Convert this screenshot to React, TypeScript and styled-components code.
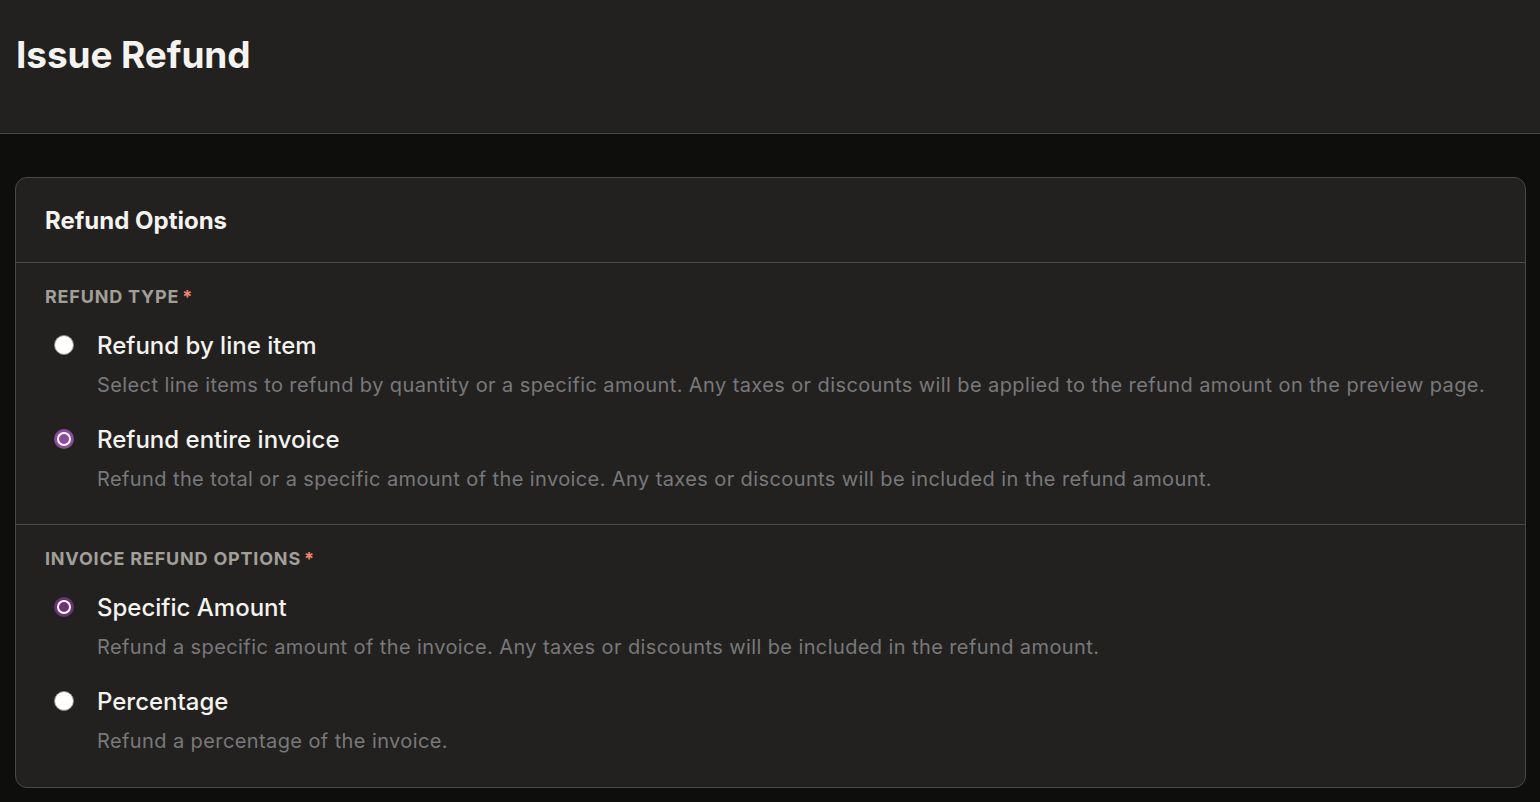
import React, { useState } from 'react';
import styled, { createGlobalStyle } from 'styled-components';

const GlobalStyle = createGlobalStyle`
    html, body {
        margin: 0;
        padding: 0;
        background: #0e0e0d;
        font-family: "Inter", "Noto Sans", sans-serif;
        -webkit-font-smoothing: antialiased;
    }
    * {
        box-sizing: border-box;
    }
`;

const Page = styled.div`
    min-height: 802px;
    background: #0e0e0d;
`;

const TopBar = styled.header`
    height: 134px;
    background: #222120;
    border-bottom: 1px solid #4a4946;
    padding: 32px 16px 0;
`;

const Title = styled.h1`
    margin: 0;
    font-size: 37px;
    line-height: 46px;
    font-weight: 700;
    color: #f4f3ef;
    letter-spacing: -0.1px;
`;

const Content = styled.main`
    padding: 43px 14px 16px 15px;
`;

const Card = styled.section`
    background: #222120;
    border: 1px solid #4a4946;
    border-radius: 12px;
`;

const CardHeader = styled.div`
    height: 85px;
    display: flex;
    align-items: center;
    padding: 0 29px;
    border-bottom: 1px solid #4a4946;
`;

const CardTitle = styled.h2`
    margin: 0;
    font-size: 24px;
    font-weight: 700;
    color: #f4f3ef;
`;

const Section = styled.div<{ last?: boolean }>`
    padding: ${({ last }) => (last ? '24px 29px 33px' : '24px 29px 32px')};
    border-bottom: ${({ last }) => (last ? 'none' : '1px solid #4a4946')};
    display: flex;
    flex-direction: column;
`;

const SectionLabel = styled.div`
    font-size: 18px;
    line-height: 20px;
    font-weight: 700;
    letter-spacing: 0.8px;
    color: #a19f98;
    text-transform: uppercase;
    margin-bottom: 25px;
`;

const Required = styled.span`
    color: #f0876a;
    margin-left: 3px;
`;

const OptionList = styled.div`
    display: flex;
    flex-direction: column;
    gap: 28px;
`;

const OptionRow = styled.label`
    display: flex;
    align-items: flex-start;
    gap: 23px;
    padding-left: 9px;
    cursor: pointer;
`;

const Radio = styled.span<{ checked: boolean; tone?: 'light' | 'dark' }>`
    flex: none;
    width: 20px;
    height: 20px;
    margin-top: 3px;
    border-radius: 50%;
    background: ${({ checked, tone }) =>
        checked ? (tone === 'dark' ? '#6c3277' : '#8e4a9b') : '#ffffff'};
    border: ${({ checked }) => (checked ? 'none' : '1.5px solid #8a8985')};
    display: flex;
    align-items: center;
    justify-content: center;
    &::after {
        content: '';
        display: ${({ checked }) => (checked ? 'block' : 'none')};
        width: 10px;
        height: 10px;
        border-radius: 50%;
        border: 2px solid #ffffff;
        box-sizing: content-box;
        background: inherit;
    }
`;

const OptionText = styled.div`
    display: flex;
    flex-direction: column;
    gap: 12px;
`;

const OptionTitle = styled.div`
    font-size: 24px;
    line-height: 28px;
    font-weight: 500;
    color: #f4f3ef;
`;

const OptionDesc = styled.div`
    font-size: 20px;
    line-height: 26px;
    letter-spacing: 0.4px;
    color: #79787a;
`;

type Choice = {
    value: string;
    title: string;
    description: string;
};

const refundTypes: Choice[] = [
    {
        value: 'line',
        title: 'Refund by line item',
        description:
            'Select line items to refund by quantity or a specific amount. Any taxes or discounts will be applied to the refund amount on the preview page.',
    },
    {
        value: 'entire',
        title: 'Refund entire invoice',
        description:
            'Refund the total or a specific amount of the invoice. Any taxes or discounts will be included in the refund amount.',
    },
];

const invoiceOptions: Choice[] = [
    {
        value: 'amount',
        title: 'Specific Amount',
        description:
            'Refund a specific amount of the invoice. Any taxes or discounts will be included in the refund amount.',
    },
    {
        value: 'percentage',
        title: 'Percentage',
        description: 'Refund a percentage of the invoice.',
    },
];

const RadioGroup = ({
    choices,
    value,
    onChange,
    tone,
}: {
    choices: Choice[];
    value: string;
    onChange: (v: string) => void;
    tone?: 'light' | 'dark';
}) => (
    <OptionList>
        {choices.map((c) => (
            <OptionRow key={c.value} onClick={() => onChange(c.value)}>
                <Radio checked={c.value === value} tone={tone} />
                <OptionText>
                    <OptionTitle>{c.title}</OptionTitle>
                    <OptionDesc>{c.description}</OptionDesc>
                </OptionText>
            </OptionRow>
        ))}
    </OptionList>
);

const App = () => {
    const [refundType, setRefundType] = useState('entire');
    const [invoiceOption, setInvoiceOption] = useState('amount');

    return (
        <Page>
            <GlobalStyle />
            <TopBar>
                <Title>Issue Refund</Title>
            </TopBar>
            <Content>
                <Card>
                    <CardHeader>
                        <CardTitle>Refund Options</CardTitle>
                    </CardHeader>
                    <Section>
                        <SectionLabel>
                            Refund type<Required>*</Required>
                        </SectionLabel>
                        <RadioGroup choices={refundTypes} value={refundType} onChange={setRefundType} />
                    </Section>
                    <Section last>
                        <SectionLabel>
                            Invoice refund options<Required>*</Required>
                        </SectionLabel>
                        <RadioGroup
                            choices={invoiceOptions}
                            value={invoiceOption}
                            onChange={setInvoiceOption}
                            tone="dark"
                        />
                    </Section>
                </Card>
            </Content>
        </Page>
    );
};

export default App;
